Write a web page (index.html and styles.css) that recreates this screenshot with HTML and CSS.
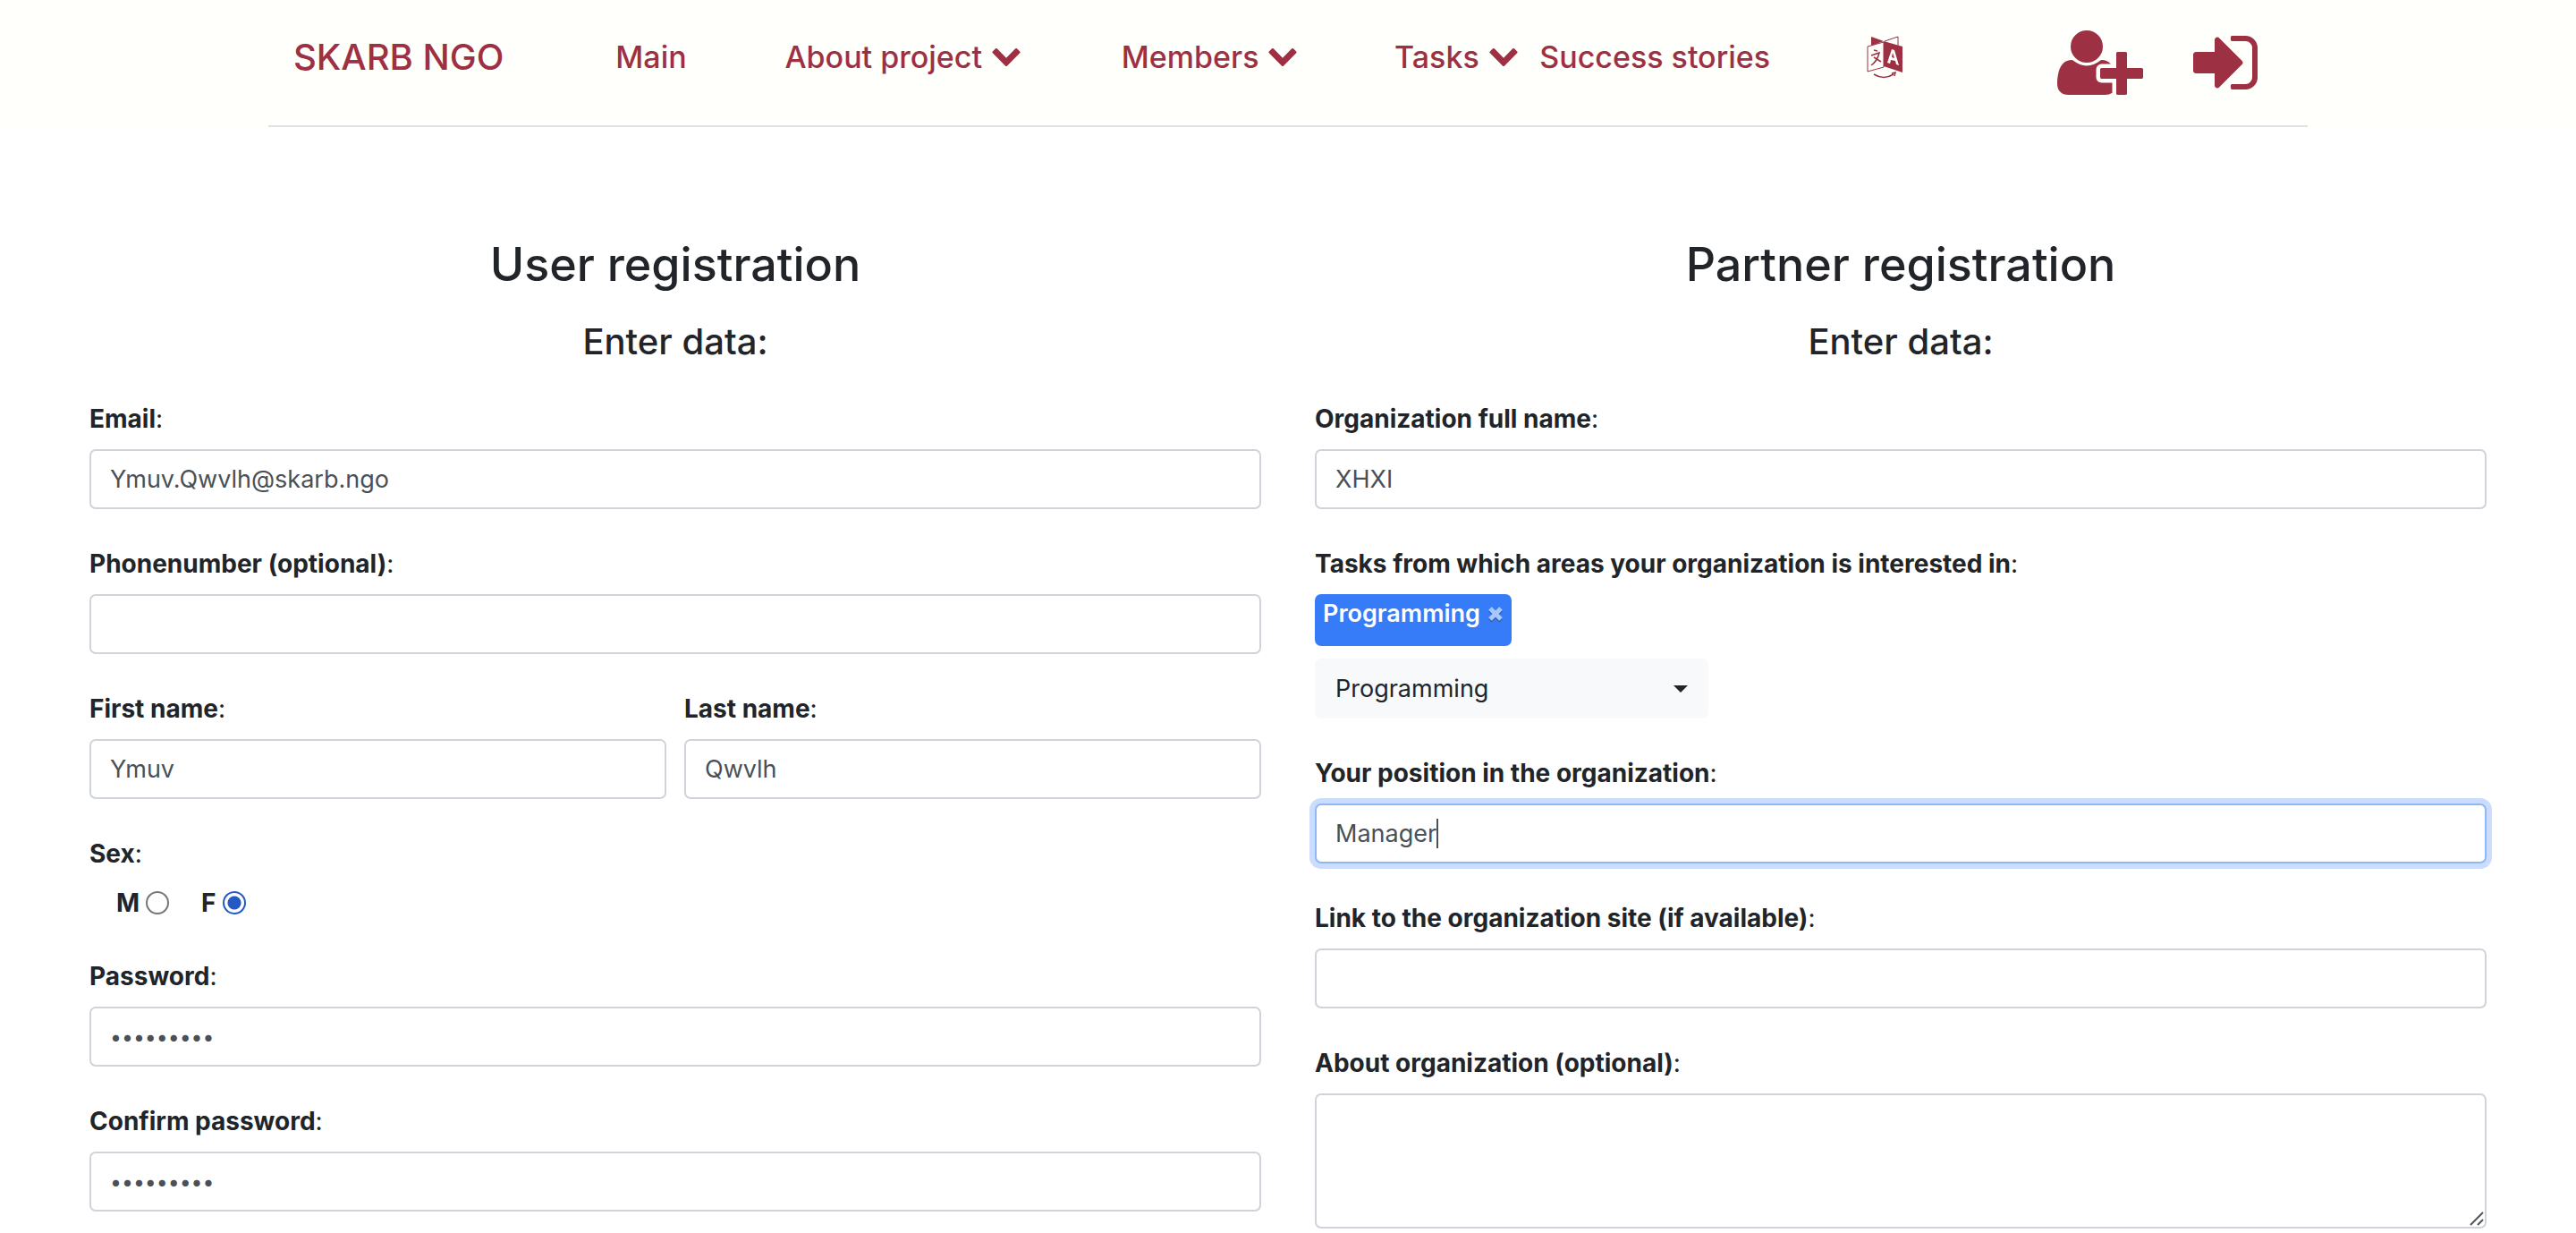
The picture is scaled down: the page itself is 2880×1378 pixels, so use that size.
FILE: index.html
```html
<!DOCTYPE html>
<html lang="en">
<head>
<meta charset="utf-8">
<meta name="viewport" content="width=device-width, initial-scale=1">
<title>SKARB NGO - Registration</title>
<link rel="stylesheet" href="styles.css">
</head>
<body>
<svg class="sprite" aria-hidden="true">
  <symbol id="chevron" viewBox="90 533 1612 1035"><path d="M1683 808l-742 741q-19 19-45 19t-45-19l-742-741q-19-19-19-45.500t19-45.500l166-165q19-19 45-19t45 19l531 531 531-531q19-19 45-19t45 19l166 165q19 19 19 45.500t-19 45.500z"/></symbol>
</svg>

<header class="site-header">
  <nav class="navbar">
    <a class="brand" href="#">SKARB NGO</a>
    <a class="nav-link" href="#">Main</a>
    <a class="nav-link" href="#">About project <svg class="chevron"><use href="#chevron"/></svg></a>
    <a class="nav-link" href="#">Members <svg class="chevron"><use href="#chevron"/></svg></a>
    <a class="nav-link" href="#">Tasks <svg class="chevron"><use href="#chevron"/></svg></a>
    <a class="nav-link" href="#">Success stories</a>
    <a class="nav-icon" href="#" aria-label="Change language">
      <svg width="40" height="48" viewBox="0 0 40 48">
        <path d="M5 1 19 6 5 11z"/>
        <path d="M20 6 35 1v11" fill="none" stroke="currentColor"/>
        <path d="M1 12 19 7v28L1 40z" fill="none" stroke="currentColor"/>
        <path fill-rule="evenodd" d="M19 6 40 12v29L19 34zM28 15 23 30l3 1 1-4 5 1 1 4 3 1-5-17zM29 19l2 6-3-1z"/>
        <path d="M8 16l4 1M5 22l9-3q-2 9-9 14M8 24l8 5" fill="none" stroke="currentColor" stroke-width="1.500"/>
        <path d="M8 43q11 7 22 0M28 42l4-1-1 4" fill="none" stroke="currentColor" stroke-width="1.500"/>
      </svg>
    </a>
    <a class="nav-icon nav-icon-large" href="#" aria-label="Register">
      <svg width="96" height="72" viewBox="0 128 2048 1536"><path d="M704 896q-159 0-271.500-112.500t-112.500-271.500 112.500-271.500 271.500-112.500 271.500 112.500 112.500 271.500-112.500 271.500-271.500 112.500zm960 128h352q13 0 22.500 9.500t9.500 22.500v192q0 13-9.500 22.500t-22.500 9.500h-352v352q0 13-9.500 22.500t-22.500 9.500h-192q-13 0-22.500-9.500t-9.500-22.500v-352h-352q-13 0-22.500-9.500t-9.500-22.500v-192q0-13 9.500-22.500t22.500-9.500h352v-352q0-13 9.500-22.500t22.500-9.500h192q13 0 22.500 9.500t9.500 22.500v352zm-736 224q0 52 38 90t90 38h256v238q-68 50-171 50h-874q-121 0-194-69t-73-190q0-53 3.500-103.500t14-109 26.500-108.500 43-97.500 62-81 85.500-53.500 111.500-20q19 0 39 17 79 61 154.500 91.500t164.500 30.500 164.500-30.500 154.500-91.500q20-17 39-17 132 0 217 96h-223q-52 0-90 38t-38 90v192z"/></svg>
    </a>
    <a class="nav-icon nav-icon-large" href="#" aria-label="Sign in">
      <svg width="72" height="72" viewBox="128 128 1536 1536"><path d="M1312 896q0 26-19 45l-544 544q-19 19-45 19t-45-19-19-45v-288h-448q-26 0-45-19t-19-45v-384q0-26 19-45t45-19h448v-288q0-26 19-45t45-19 45 19l544 544q19 19 19 45zm352-352v704q0 119-84.500 203.500t-203.500 84.500h-320q-13 0-22.500-9.500t-9.500-22.500q0-4-1-20t-.5-26.500 3-23.500 10-19.500 20.500-6.500h320q66 0 113-47t47-113v-704q0-66-47-113t-113-47h-312l-11.500-1-11.500-3-8-5.500-7-9-2-13.500q0-4-1-20t-.5-26.500 3-23.500 10-19.500 20.500-6.500h320q119 0 203.500 84.500t84.500 203.500z"/></svg>
    </a>
  </nav>
</header>

<main class="registration">
  <form class="panel">
    <h2>User registration</h2>
    <h3>Enter data:</h3>
    <div class="field">
      <label for="email"><b>Email</b>:</label>
      <input class="control" id="email" type="email" value="Ymuv.Qwvlh@skarb.ngo">
    </div>
    <div class="field">
      <label for="phone"><b>Phonenumber (optional)</b>:</label>
      <input class="control" id="phone" type="tel">
    </div>
    <div class="name-row">
      <div class="field">
        <label for="first-name"><b>First name</b>:</label>
        <input class="control" id="first-name" type="text" value="Ymuv">
      </div>
      <div class="field">
        <label for="last-name"><b>Last name</b>:</label>
        <input class="control" id="last-name" type="text" value="Qwvlh">
      </div>
    </div>
    <fieldset class="field">
      <legend><b>Sex</b>:</legend>
      <div class="radios">
        <label class="radio"><b>M</b><input type="radio" name="sex"></label>
        <label class="radio"><b>F</b><input type="radio" name="sex" checked></label>
      </div>
    </fieldset>
    <div class="field">
      <label for="password"><b>Password</b>:</label>
      <input class="control" id="password" type="password" value="password1">
    </div>
    <div class="field">
      <label for="confirm"><b>Confirm password</b>:</label>
      <input class="control" id="confirm" type="password" value="password1">
    </div>
  </form>

  <form class="panel">
    <h2>Partner registration</h2>
    <h3>Enter data:</h3>
    <div class="field">
      <label for="organization"><b>Organization full name</b>:</label>
      <input class="control" id="organization" type="text" value="XHXI">
    </div>
    <div class="field">
      <label for="areas"><b>Tasks from which areas your organization is interested in</b>:</label>
      <div class="areas">
        <span class="tag">Programming <button class="tag-remove" type="button" aria-label="Remove Programming"><svg width="16" height="16" viewBox="0 0 16 16"><path d="M2 2l12 12M14 2 2 14"/></svg></button></span>
        <div class="select">
          <select id="areas"><option>Programming</option></select>
          <svg class="caret" width="16" height="8" viewBox="0 0 16 8"><path d="M0 0h16L8 8z"/></svg>
        </div>
      </div>
    </div>
    <div class="field">
      <label for="position"><b>Your position in the organization</b>:</label>
      <div class="text-entry">
        <input class="control is-focused" id="position" type="text" value="Manager">
        <span class="text-cursor"></span>
      </div>
    </div>
    <div class="field">
      <label for="site"><b>Link to the organization site (if available)</b>:</label>
      <input class="control" id="site" type="url">
    </div>
    <div class="field">
      <label for="about"><b>About organization (optional)</b>:</label>
      <div class="textarea">
        <textarea class="control" id="about" rows="3"></textarea>
        <svg class="grip" width="16" height="16" viewBox="0 0 16 16"><path d="M1 15 15 1M9 15l6-6"/></svg>
      </div>
    </div>
  </form>
</main>
</body>
</html>
```
FILE: styles.css
```css
*, *::before, *::after { box-sizing: border-box; }

body {
  margin: 0;
  background: #fff;
  color: #212529;
  font: 400 28px/42px Inter, "Liberation Sans", sans-serif;
}

.sprite { display: none; }
svg { fill: currentColor; flex: none; }

/* Header */
.site-header {
  background: #fffffc;
}
.navbar {
  display: grid;
  grid-template-columns: 360fr 189fr 376fr 305fr 162fr 365fr 213fr 152fr 98fr;
  align-items: center;
  max-width: 2280px;
  margin: 0 auto;
  padding: 22px 30px 34px 28px;
  border-bottom: 2px solid #dee2e6;
}
.navbar a {
  color: #9e3043;
  text-decoration: none;
  white-space: nowrap;
}
.brand { font-size: 40px; font-weight: 500; }
.nav-link {
  display: flex;
  align-items: center;
  gap: 11px;
  font-size: 34px;
  font-weight: 500;
}
.chevron { width: 32px; height: 20px; }
.nav-icon { display: flex; }
.nav-icon-large { align-self: end; min-height: 84px; align-items: flex-end; }

/* Registration forms */
.registration {
  display: grid;
  grid-template-columns: 1fr 1fr;
  gap: 60px;
  padding: 120px 100px 0;
}
.panel { min-width: 0; }
h2, h3 {
  margin: 0;
  font-weight: 500;
  text-align: center;
}
h2 { margin-bottom: 27px; font-size: 52px; line-height: 68px; }
h3 { margin-bottom: 40px; font-size: 40px; line-height: 50px; }

.field {
  display: flex;
  flex-direction: column;
  gap: 13px;
  min-width: 0;
  margin: 0 0 40px;
  padding: 0;
  border: 0;
}
.panel > .field:last-child { margin-bottom: 0; }
legend { margin-bottom: 13px; padding: 0; }
b { font-weight: 700; }

.name-row {
  display: grid;
  grid-template-columns: 1fr 1fr;
  gap: 20px;
}

.control {
  display: block;
  width: 100%;
  height: 67px;
  padding: 10px 21px;
  border: 2px solid #ced4da;
  border-radius: 7px;
  background: #fff;
  color: #495057;
  font: inherit;
  font-size: 27px;
  outline: 0;
}
.control[type="password"] { font-size: 23px; }
.control.is-focused {
  border-color: #8cb8f8;
  box-shadow: 0 0 0 6px #cbdcfd;
}

.text-entry { position: relative; }
.text-cursor {
  position: absolute;
  top: 17px;
  left: 136px;
  width: 2px;
  height: 33px;
  background: #495057;
}

.radios { display: flex; gap: 36px; padding-left: 30px; }
.radio { display: flex; align-items: center; gap: 7px; }
.radio input {
  appearance: none;
  width: 26px;
  height: 26px;
  margin: 0;
  border: 2px solid #767676;
  border-radius: 50%;
  background: #fff;
}
.radio input:checked {
  border-color: #2459c4;
  background: radial-gradient(circle, #2459c4 7px, #fff 8px);
}

.areas {
  display: flex;
  flex-direction: column;
  align-items: flex-start;
  gap: 14px;
}
.tag {
  display: flex;
  gap: 9px;
  padding: 1px 10px 15px 9px;
  border-radius: 7px;
  background: #367bf7;
  color: #fff;
  font-size: 27px;
  font-weight: 600;
}
.tag-remove {
  display: flex;
  align-items: center;
  padding: 0;
  border: 0;
  background: none;
  color: #a9c7fb;
}
.tag-remove svg {
  overflow: visible;
  stroke: currentColor;
  stroke-width: 5;
  filter: drop-shadow(0 2px 0 #3263b8);
}

.select { display: grid; align-items: center; width: 440px; }
.select > * { grid-area: 1 / 1; }
.select select {
  appearance: none;
  height: 67px;
  padding: 10px 23px;
  border: 0;
  border-radius: 7px;
  background: #f8f9fa;
  color: #212529;
  font: inherit;
  font-size: 27px;
}
.caret { justify-self: end; margin-right: 23px; pointer-events: none; }

.textarea { display: grid; }
.textarea > * { grid-area: 1 / 1; }
.textarea .control { height: 151px; resize: none; }
.grip {
  place-self: end;
  margin: 3px;
  fill: none;
  stroke: #555;
  stroke-width: 2;
  pointer-events: none;
}
```
